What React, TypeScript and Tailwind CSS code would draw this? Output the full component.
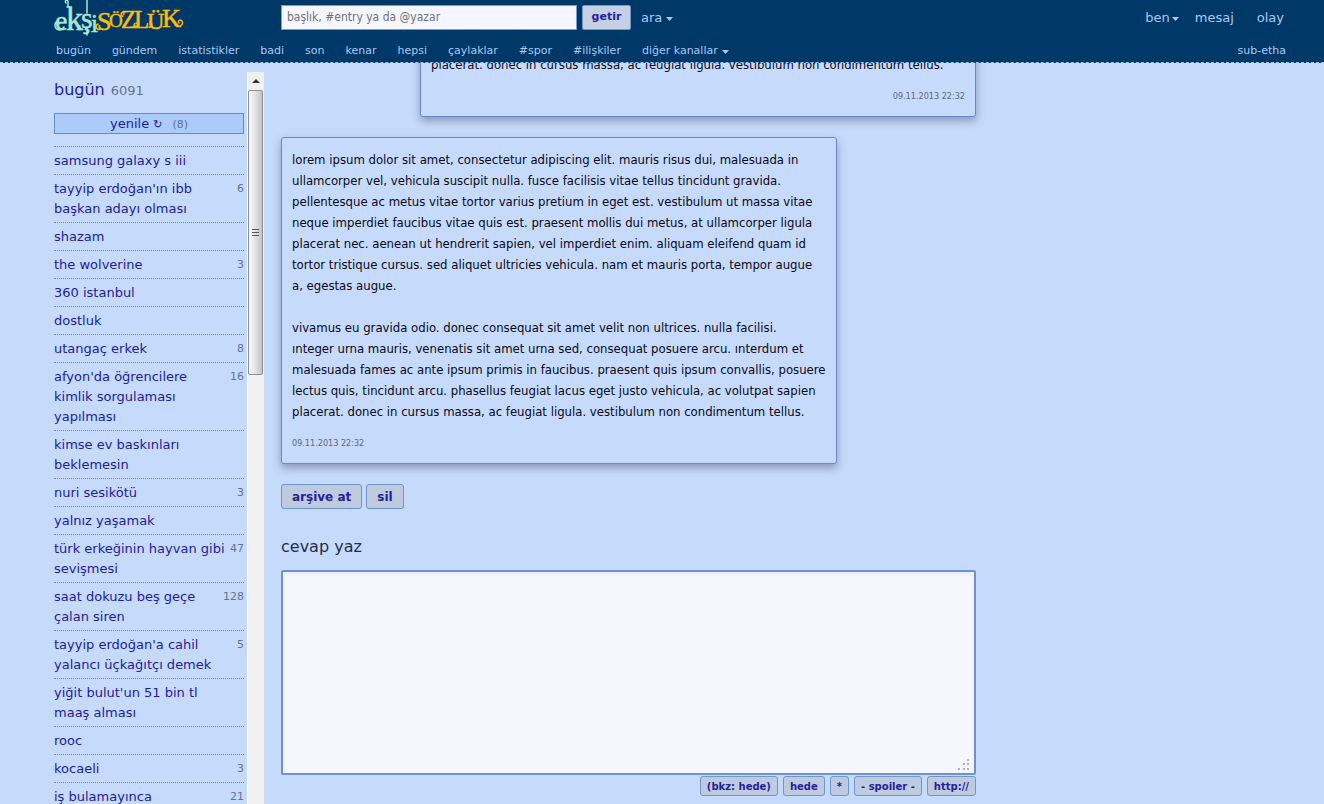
import React from "react";

type Topic = { title: string; count?: number };

const channels = ["bugün", "gündem", "istatistikler", "badi", "son", "kenar", "hepsi", "çaylaklar", "#spor", "#ilişkiler"];

const topics: Topic[] = [
  { title: "samsung galaxy s iii" },
  { title: "tayyip erdoğan'ın ibb başkan adayı olması", count: 6 },
  { title: "shazam" },
  { title: "the wolverine", count: 3 },
  { title: "360 istanbul" },
  { title: "dostluk" },
  { title: "utangaç erkek", count: 8 },
  { title: "afyon'da öğrencilere kimlik sorgulaması yapılması", count: 16 },
  { title: "kimse ev baskınları beklemesin" },
  { title: "nuri sesikötü", count: 3 },
  { title: "yalnız yaşamak" },
  { title: "türk erkeğinin hayvan gibi sevişmesi", count: 47 },
  { title: "saat dokuzu beş geçe çalan siren", count: 128 },
  { title: "tayyip erdoğan'a cahil yalancı üçkağıtçı demek", count: 5 },
  { title: "yiğit bulut'un 51 bin tl maaş alması" },
  { title: "rooc" },
  { title: "kocaeli", count: 3 },
  { title: "iş bulamayınca", count: 21 },
];

const snippets = ["(bkz: hede)", "hede", "*", "- spoiler -", "http://"];

function Caret() {
  return (
    <svg viewBox="0 0 7 4" className="mt-0.5 h-1 w-[7px]" fill="currentColor" aria-hidden="true">
      <path d="M0 0h7L3.5 4z" />
    </svg>
  );
}

function Logo() {
  return (
    <svg viewBox="0 0 130 36" className="block h-9 w-[130px]" role="img" aria-label="ekşi sözlük">
      <g fontFamily="'Liberation Serif', serif" strokeWidth="0.5">
        <text y="30" fill="#a9e8cf" stroke="#a9e8cf">
          <tspan x="1" fontSize="28">e</tspan>
          <tspan x="12" fontSize="34">k</tspan>
          <tspan x="27" y="28" fontSize="30">ş</tspan>
          <tspan x="37" y="32" fontSize="25">i</tspan>
        </text>
        <text fill="#fcbc0c" stroke="#fcbc0c">
          <tspan x="43" y="30" fontSize="26">S</tspan>
          <tspan x="55" y="27" fontSize="19">Ö</tspan>
          <tspan x="67" y="28" fontSize="25">Z</tspan>
          <tspan x="80" y="28" fontSize="25">L</tspan>
          <tspan x="93" y="29" fontSize="24">Ü</tspan>
          <tspan x="108" y="27" fontSize="26">K</tspan>
        </text>
      </g>
      <g fill="none" strokeWidth="1.5" strokeLinecap="round">
        <g stroke="#a9e8cf">
          <path d="M10 27c-3 5-9 3-9-2 0-4 4-4 4-1M14 7V1c-1-2-4 0-2 2M33 0v13M33 28v7M26 26c-3 1-1 5 2 3" />
        </g>
        <g stroke="#fcbc0c">
          <path d="M44 24c-3 1-2 7 2 5M69 12c-3 1-2 5 0 4M80 26c4 2 5-3 2-3M95 27c3 1 4-4 1-4M121 25c4 3 9 0 7-4-2-2-5 0-3 2" />
        </g>
      </g>
    </svg>
  );
}

function Message({ outgoing, children }: { outgoing?: boolean; children: React.ReactNode }) {
  return (
    <article
      className={
        "w-4/5 rounded-[3px] border border-[#6a87cc] bg-[#c6dbfb] px-2.5 py-[11px] shadow-[0_4px_8px_rgba(50,60,90,0.42)] " +
        (outgoing ? "self-end" : "self-start")
      }
    >
      <div className="flex flex-col gap-[21px] text-[13px] leading-[21px] text-[#080818]">{children}</div>
      <time className={"mt-3 block text-[9px] leading-[18px] text-[#5c6878] " + (outgoing ? "text-right" : "text-left")}>
        09.11.2013 22:32
      </time>
    </article>
  );
}

function Header() {
  return (
    <header className="relative z-10 h-[63px] shrink-0 border-b border-dashed border-[#9fbfea] bg-[#003968] px-[54px] text-[#a9c8f4]">
      <div className="flex h-[35px] items-center">
        <a href="#" className="w-[227px] shrink-0">
          <Logo />
        </a>
        <form className="flex items-center gap-[5px]" onSubmit={(e) => e.preventDefault()}>
          <input
            type="text"
            aria-label="arama"
            placeholder="başlık, #entry ya da @yazar"
            className="h-[25px] w-[296px] border border-[#6f9fd6] bg-[#f5f6ff] px-[5px] pb-0.5 font-['DejaVu_Sans_Condensed','DejaVu_Sans',sans-serif] text-[12px] text-[#222] outline-none placeholder:text-[#6f727a]"
          />
          <button className="h-[25px] w-[49px] rounded-[2px] border border-[#7297c9] bg-[#c5d0e4] text-[11px] font-bold text-[#26209c]">getir</button>
        </form>
        <button className="ml-2.5 flex items-center gap-1 text-[13px]">
          ara <Caret />
        </button>
        <nav className="mr-[-14px] ml-auto flex items-center text-[13px]">
          <button className="mr-4 flex items-center gap-0.5">
            ben <Caret />
          </button>
          <a href="#" className="mr-[23px]">mesaj</a>
          <a href="#">olay</a>
        </nav>
      </div>
      <nav className="flex h-[27px] items-center gap-[21px] pt-[5px] pl-0.5 text-[11px]">
        {channels.map((c) => (
          <a key={c} href="#">{c}</a>
        ))}
        <button className="flex items-center gap-1">
          diğer kanallar <Caret />
        </button>
        <a href="#" className="mr-[-16px] ml-auto">sub-etha</a>
      </nav>
    </header>
  );
}

function Sidebar() {
  return (
    <aside className="flex shrink-0 overflow-hidden pt-[9px]">
      <div className="w-[190px]">
        <h2 className="flex items-baseline gap-1.5 pt-1.5 text-[16px] leading-6 text-[#1c1c9c]">
          bugün <small className="text-[13px] text-[#5f7390]">6091</small>
        </h2>
        <button className="mt-2.5 flex h-[21px] w-full items-baseline justify-center border border-[#5f8dd0] bg-[#accbf8] text-[13px] leading-5 text-[#1c1c9c]">
          yenile
          <span className="mr-2.5 ml-1 text-[11px]" aria-hidden="true">↻</span>
          <small className="text-[11px] text-[#5f7390]">(8)</small>
        </button>
        <ul className="mt-3 text-[13px] leading-5 text-[#1c1c9c]">
          {topics.map((t) => (
            <li key={t.title} className="border-t border-dotted border-[#6d87ad]">
              <a href="#" className="flex items-start justify-between pt-1 pb-[3px]">
                <span className="max-w-[172px]">{t.title}</span>
                {t.count !== undefined && <small className="text-[11px] leading-5 text-[#61748e]">{t.count}</small>}
              </a>
            </li>
          ))}
        </ul>
      </div>
      <div className="ml-[3px] flex w-[17px] flex-col items-stretch border-l border-white bg-[#f0f0f0]">
        <button aria-label="yukarı" className="flex h-[18px] shrink-0 items-center justify-center text-[#333]">
          <svg viewBox="0 0 8 4" className="h-1 w-2" fill="currentColor" aria-hidden="true">
            <path d="M0 4h8L4 0z" />
          </svg>
        </button>
        <div className="mr-px flex h-[285px] shrink-0 flex-col items-center justify-center gap-0.5 rounded-[2px] border border-[#8d8f94] bg-linear-to-r from-[#fafafa] via-[#e2e2e4] to-[#c2c3c7]">
          <span className="h-px w-[7px] bg-[#555]" />
          <span className="h-px w-[7px] bg-[#555]" />
          <span className="h-px w-[7px] bg-[#555]" />
        </div>
      </div>
    </aside>
  );
}

export default function App() {
  return (
    <div className="flex h-screen flex-col overflow-hidden bg-[#c6dbfb] font-['DejaVu_Sans',sans-serif]">
      <Header />
      <div className="flex min-h-0 grow pl-[54px]">
        <Sidebar />
        <main className="ml-[17px] max-w-[695px] grow">
          <section className="-mt-[21px] flex flex-col gap-5 font-['DejaVu_Sans_Condensed','DejaVu_Sans',sans-serif]">
            <Message outgoing>
              <p>placerat. donec in cursus massa, ac feugiat ligula. vestibulum non condimentum tellus.</p>
            </Message>
            <Message>
              <p>
                lorem ipsum dolor sit amet, consectetur adipiscing elit. mauris risus dui, malesuada in ullamcorper vel,
                vehicula suscipit nulla. fusce facilisis vitae tellus tincidunt gravida. pellentesque ac metus vitae tortor
                varius pretium in eget est. vestibulum ut massa vitae neque imperdiet faucibus vitae quis est. praesent
                mollis dui metus, at ullamcorper ligula placerat nec. aenean ut hendrerit sapien, vel imperdiet enim.
                aliquam eleifend quam id tortor tristique cursus. sed aliquet ultricies vehicula. nam et mauris porta,
                tempor augue a, egestas augue.
              </p>
              <p>
                vivamus eu gravida odio. donec consequat sit amet velit non ultrices. nulla facilisi.
                <br />
                ınteger urna mauris, venenatis sit amet urna sed, consequat posuere arcu. ınterdum et malesuada fames ac
                ante ipsum primis in faucibus. praesent quis ipsum convallis, posuere lectus quis, tincidunt arcu. phasellus
                feugiat lacus eget justo vehicula, ac volutpat sapien placerat. donec in cursus massa, ac feugiat ligula.
                vestibulum non condimentum tellus.
              </p>
            </Message>
          </section>
          <div className="mt-5 flex gap-1">
            {["arşive at", "sil"].map((b) => (
              <button key={b} className="h-[25px] rounded-[3px] border border-[#6e95cd] bg-[#becbdf] px-2.5 text-[12px] font-bold text-[#26209c]">
                {b}
              </button>
            ))}
          </div>
          <label htmlFor="reply" className="mt-[26px] block text-[16px] leading-6 text-[#1d2f4c]">
            cevap yaz
          </label>
          <div className="relative mt-[11px]">
            <textarea
              id="reply"
              className="block h-[205px] w-full resize-none rounded-[2px] border-2 border-[#6c94cb] bg-[#f5f6ff] p-2 text-[13px] shadow-[inset_0_2px_4px_rgba(0,0,0,0.06)] outline-none"
            />
            <svg viewBox="0 0 12 12" className="pointer-events-none absolute right-1.5 bottom-1 size-3" fill="#b0b3bd" aria-hidden="true">
              <path d="M9 0h2v2H9zM5 4h2v2H5zM9 4h2v2H9zM0 9h2v2H0zM5 9h2v2H5zM9 9h2v2H9z" />
            </svg>
          </div>
          <div className="mt-px flex justify-end gap-[5px]">
            {snippets.map((s) => (
              <button key={s} className="h-5 rounded-[3px] border border-[#6e95cd] bg-[#becbdf] px-1.5 text-[10px] font-bold text-[#26209c]">
                {s}
              </button>
            ))}
          </div>
        </main>
      </div>
    </div>
  );
}
